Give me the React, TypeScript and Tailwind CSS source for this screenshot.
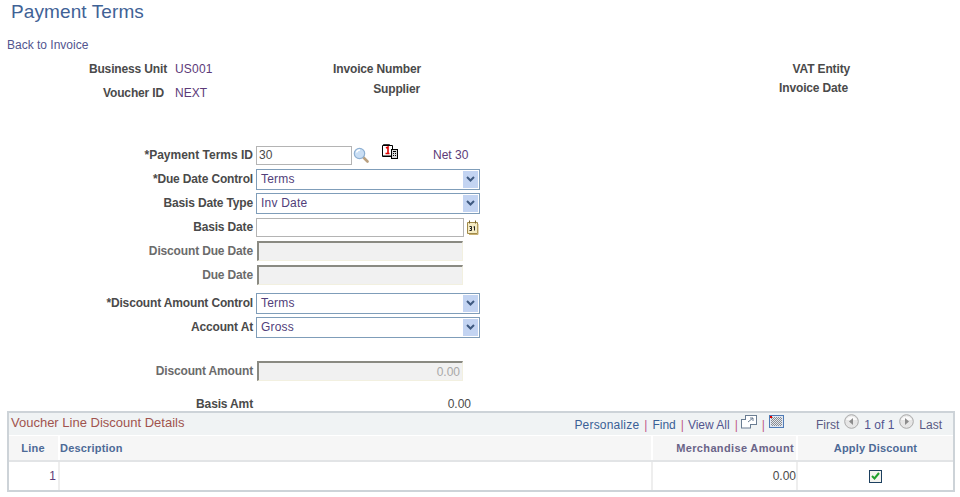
import React from "react";

const labelBase = "text-right font-bold text-[12px] leading-none tracking-[-0.15px]";

function Chevron() {
  return (
    <span className="flex h-[17px] w-[15px] items-center justify-center bg-[#c3d4f2]">
      <svg width="9" height="6" viewBox="0 0 9 6">
        <path d="M1 1 L4.5 4.5 L8 1" fill="none" stroke="#3f5a80" strokeWidth="2" />
      </svg>
    </span>
  );
}

function Row({ label, dim, wide, h = "h-6", children }: { label: string; dim?: boolean; wide?: boolean; h?: string; children?: React.ReactNode }) {
  return (
    <div className={`flex ${h} items-center`}>
      <div className={`w-[253px] shrink-0 ${labelBase} ${wide ? "tracking-normal" : ""} ${dim ? "text-[#6b6b6b]" : "text-[#4a4a4a]"}`}>{label}</div>
      {children}
    </div>
  );
}

function Select({ value }: { value: string }) {
  return (
    <div className="ml-[3px] flex h-[21px] w-[224px] items-center justify-between border border-[#7f9db9] bg-white pl-[4px] pr-[1px] text-[12px] tracking-[0.2px] text-[#51407a]">
      <span>{value}</span>
      <Chevron />
    </div>
  );
}

function Disabled({ value }: { value?: string }) {
  return (
    <div className="ml-[4px] flex h-[20px] w-[206px] items-center justify-end border-t-2 border-l-2 border-t-[#8a8a82] border-l-[#8a8a82] border-b border-r border-b-[#f2f0e0] border-r-[#f2f0e0] bg-[#f1f1f1] pr-[2px] text-[12px] text-[#a8a8a8]">
      {value}
    </div>
  );
}

function Magnifier() {
  return (
    <svg width="16" height="16" viewBox="0 0 16 16">
      <line x1="10" y1="10" x2="14.5" y2="14.5" stroke="#b9a07f" strokeWidth="2.6" strokeLinecap="round" />
      <circle cx="6.5" cy="6.5" r="5.2" fill="#c9def4" stroke="#8fb0d2" strokeWidth="1.2" />
      <path d="M3.5 5.5 A3.5 3.5 0 0 1 7 3" fill="none" stroke="#ffffff" strokeWidth="1.4" />
    </svg>
  );
}

function DocCalc() {
  return (
    <svg width="16" height="15" viewBox="0 0 16 15">
      <path d="M0.5 1.5 H10.5 V12.5 H0.5 Z" fill="#fff" stroke="#000" />
      <path d="M1 1 h1 v-1 h1 v1 h1 v-1 h1 v1 h1 v-1 h1 v1 h1" stroke="#000" strokeWidth="0.8" fill="none" />
      <path d="M4 4 L6 3 V9 M3.5 9.5 H7.5" stroke="#e00000" strokeWidth="1.6" fill="none" />
      <path d="M1.5 11.5 H9.5" stroke="#000" strokeDasharray="1 1" />
      <rect x="9.5" y="5.5" width="6" height="9" fill="#d8d8d8" stroke="#000" />
      <path d="M11 7.5 H14" stroke="#000" />
      <path d="M11 9.5 H14 M11 11.5 H14" stroke="#000" strokeDasharray="1 1" />
    </svg>
  );
}

function CalendarIcon() {
  return (
    <svg width="13" height="15" viewBox="0 0 13 15">
      <path d="M1.5 2.5 H11.5 V13.5 H1.5 Z" fill="#f6ecc4" stroke="#a08a4a" />
      <path d="M3.5 0.5 V3.5 M9.5 0.5 V3.5" stroke="#7a6530" />
      <path d="M12 4 V14.5 H3" stroke="#c8b070" fill="none" />
      <path d="M3.5 6.5 H5.5 V8.5 H4 M5.5 8.5 V10.5 H3.5 M7.5 7 L8.5 6.5 V10.5" stroke="#222" fill="none" />
    </svg>
  );
}

function Pager({ dir }: { dir: "l" | "r" }) {
  return (
    <svg width="15" height="15" viewBox="0 0 15 15">
      <circle cx="7.5" cy="7.5" r="6.8" fill="#e6e6e6" stroke="#a9a9a9" />
      <path d="M2 6 A6 6 0 0 1 13 6" fill="#fafafa" />
      <path d={dir === "l" ? "M9 4 V11 L5 7.5 Z" : "M6 4 V11 L10 7.5 Z"} fill="#8c8c8c" />
    </svg>
  );
}

function Popout() {
  return (
    <svg width="16" height="14" viewBox="0 0 16 14">
      <rect x="4.5" y="0.5" width="11" height="9" fill="#fff" stroke="#6a7d92" />
      <rect x="0.5" y="4.5" width="9" height="8.5" fill="#fff" stroke="#6a7d92" />
      <rect x="5" y="1" width="10" height="8" fill="#fff" />
      <path d="M4.5 4.5 V0.5 H15.5 V9.5 H10" fill="none" stroke="#6a7d92" />
      <path d="M7 7 L12 3 M9 3 H12 V6" fill="none" stroke="#6a7d92" />
    </svg>
  );
}

function GridIcon() {
  return (
    <svg width="15" height="13" viewBox="0 0 15 13">
      <rect x="0.5" y="0.5" width="14" height="12" fill="#dfe6f2" stroke="#4f7bb5" />
      <path d="M2 3.5 H13 M2 5.5 H13 M2 7.5 H13 M2 9.5 H13 M3.5 2 V11 M5.5 2 V11 M7.5 2 V11 M9.5 2 V11 M11.5 2 V11" stroke="#8d8d8d" strokeWidth="1" strokeDasharray="1 1" />
      <rect x="1" y="1" width="2" height="2" fill="#e00000" />
    </svg>
  );
}

function Check() {
  return (
    <span className="flex h-[13px] w-[13px] items-center justify-center border border-[#1c3f5f] bg-[#f3f3ee]">
      <svg width="9" height="8" viewBox="0 0 9 8">
        <path d="M1 4 L3.5 6.5 L8 1" fill="none" stroke="#1fa02c" strokeWidth="2" />
      </svg>
    </span>
  );
}

export default function App() {
  return (
    <div className="h-[497px] w-[960px] overflow-hidden bg-white text-[12px] font-['Liberation_Sans',Arial,sans-serif] text-[#4a4a4a]">
      <h1 className="pl-[11px] pt-[1px] text-[19px] leading-[21px] tracking-[0.1px] text-[#3f6296]">Payment Terms</h1>
      <a className="mt-[15px] block pl-[7px] text-[12px] leading-[16px] text-[#52558f]">Back to Invoice</a>

      {/* header block */}
      <div className="mt-[7px] grid h-[44px] grid-cols-[167px_8px_246px_429px]">
        <div className={`${labelBase} pt-[3px] leading-[14px]`}>Business Unit</div>
        <div />
        <div className="flex items-start justify-between">
          <span className="pt-[2px] leading-[14px] tracking-[0.2px] text-[#5c3a78]">US001</span>
          <span className="pt-[2px] font-bold leading-[14px] tracking-[-0.15px]">Invoice Number</span>
        </div>
        <div className={`${labelBase} pt-[3px] leading-[14px]`}>VAT Entity</div>
        <div className={`${labelBase} pr-[3px] pt-[6px] leading-[14px]`}>Voucher ID</div>
        <div />
        <div className="flex items-start justify-between pr-[1px]">
          <span className="pt-[5px] leading-[14px] text-[#5c3a78]">NEXT</span>
          <span className="pt-[1px] font-bold leading-[14px] tracking-[-0.15px]">Supplier</span>
        </div>
        <div className={`${labelBase} pr-[2px] pt-[1px] leading-[14px]`}>Invoice Date</div>
      </div>

      {/* form */}
      <div className="mt-[39px]">
        <Row label="*Payment Terms ID" wide>
          <div className="ml-[3px] flex h-[19px] w-[96px] items-center border border-[#b4b4b4] pl-[2px] text-[#4a4a4a]">30</div>
          <span className="ml-[1px]"><Magnifier /></span>
          <span className="mb-[7px] ml-[13px]"><DocCalc /></span>
          <span className="ml-[35px] text-[#5c3a78]">Net 30</span>
        </Row>
        <Row label="*Due Date Control"><Select value="Terms" /></Row>
        <Row label="Basis Date Type"><Select value="Inv Date" /></Row>
        <Row label="Basis Date">
          <div className="ml-[3px] h-[19px] w-[208px] border border-[#b4b4b4]" />
          <span className="ml-[2px]"><CalendarIcon /></span>
        </Row>
        <Row label="Discount Due Date" dim><Disabled /></Row>
        <Row label="Due Date" dim><Disabled /></Row>
        <div className="h-[4px]" />
        <Row label="*Discount Amount Control"><Select value="Terms" /></Row>
        <Row label="Account At"><Select value="Gross" /></Row>
        <div className="h-[20px]" />
        <Row label="Discount Amount" dim><Disabled value="0.00" /></Row>
        <div className="h-[11px]" />
        <Row label="Basis Amt" h="h-[20px]">
          <div className="ml-[194px] w-[24px] text-right">0.00</div>
        </Row>
      </div>

      {/* grid */}
      <div className="ml-[7px] mt-[-3px] w-[948px] border-2 border-[#cdd3d8]">
        <div className="flex h-[22px] items-center justify-between bg-[#f0f3f4] pl-[2px] pr-[11px]">
          <span className="mb-[2px] text-[13px] text-[#a0534e]">Voucher Line Discount Details</span>
          <div className="mt-[2px] flex items-center text-[#3a5f96]">
            <span className="tracking-[0.2px]">Personalize</span>
            <span className="mx-[5px] text-[#c0588a]">|</span>
            <span>Find</span>
            <span className="ml-[5px] mr-[4px] text-[#c0588a]">|</span>
            <span className="text-[#52558f]">View All</span>
            <span className="ml-[5px] mr-[3px] text-[#c0588a]">|</span>
            <span className="mb-[7px]"><Popout /></span>
            <span className="ml-[5px] mr-[4px] text-[#c0588a]">|</span>
            <span className="mb-[7px]"><GridIcon /></span>
            <span className="ml-[32px] text-[#5a5a82]">First</span>
            <span className="mx-[5px] mb-[7px]"><Pager dir="l" /></span>
            <span className="text-[#52558f]">1 of 1</span>
            <span className="mx-[5px] mb-[7px]"><Pager dir="r" /></span>
            <span className="text-[#5a5a82]">Last</span>
          </div>
        </div>
        <div className="grid grid-cols-[51px_1fr_145px_155px] border-y border-y-white border-b-2 border-b-[#e2e4e6] bg-[#f6f6f6] text-[11px] font-bold leading-[24px] tracking-[0.2px] text-[#4d6a96]">
          <div className="border-r-2 border-white pr-[1px] text-center">Line</div>
          <div className="border-r-2 border-white">Description</div>
          <div className="border-r-2 border-white pr-[2px] text-right tracking-[0.35px] text-[#6a6488]">Merchandise Amount</div>
          <div className="text-center">Apply Discount</div>
        </div>
        <div className="grid h-[28px] grid-cols-[51px_1fr_145px_155px] items-stretch bg-white">
          <div className="flex items-center justify-end border-r-2 border-[#eeeeee] pr-[2px] text-[#5c3a78]">1</div>
          <div className="border-r-2 border-[#eeeeee]" />
          <div className="flex items-center justify-end border-r-2 border-[#eeeeee]">0.00</div>
          <div className="flex items-center justify-center"><Check /></div>
        </div>
      </div>
    </div>
  );
}
